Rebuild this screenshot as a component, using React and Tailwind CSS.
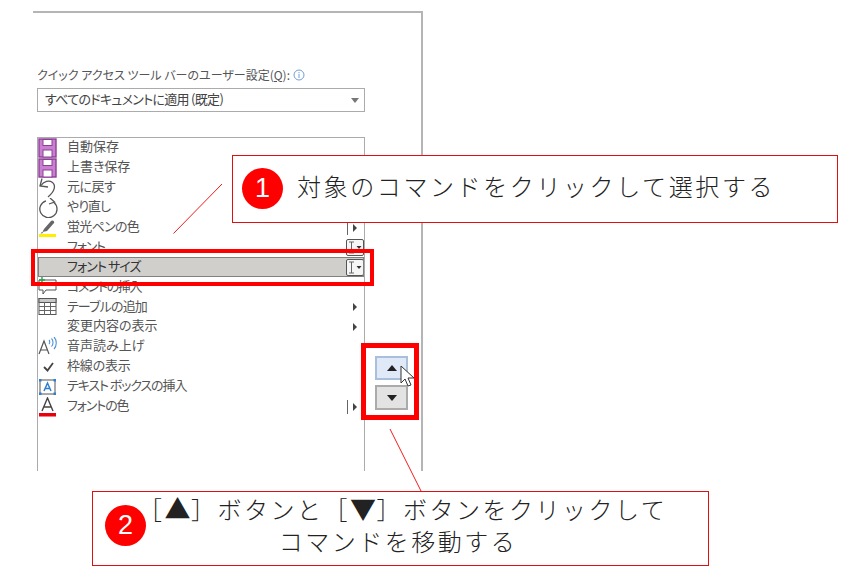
const jp = { fontFamily: '"Noto Sans CJK JP","Noto Sans",sans-serif' };

const Save = () => (
  <svg width="20" height="20" viewBox="0 0 20 20">
    <rect x="1" y="1" width="17" height="18" fill="#c97fd0" stroke="#8d3f96" strokeWidth="1.4" />
    <rect x="5" y="1.500" width="9" height="6" fill="#fff" stroke="#8d3f96" />
    <rect x="5" y="12" width="9" height="7" fill="#fff" stroke="#8d3f96" />
  </svg>
);
const Undo = () => (
  <svg width="20" height="20" viewBox="0 0 20 20" fill="none" stroke="#555" strokeWidth="1.3">
    <path d="M4 0.500L2 8l8 1" />
    <path d="M2.500 8C6 3 11 2 14.500 4.500 18 7.500 17 13 10 19" />
  </svg>
);
const Redo = () => (
  <svg width="20" height="20" viewBox="0 0 20 20" fill="none" stroke="#555" strokeWidth="1.3">
    <path d="M12 0l4.500 4-5.500 2" />
    <path d="M16 4.500A8.600 8.600 0 1 1 8 2.800" />
  </svg>
);
const Pen = () => (
  <svg width="20" height="20" viewBox="0 0 20 20">
    <path d="M6 11l7-8c1.500-1.500 4 .5 3 2l-7 8-4.500 1z" fill="#666" />
    <path d="M4 14l-1.500 1.500 3-.5z" fill="#555" />
    <rect x="1" y="16" width="17" height="3" fill="#ffee00" />
  </svg>
);
const Comment = () => (
  <svg width="20" height="20" viewBox="0 0 20 20">
    <path d="M4 3H18v10H8l-3 4v-4H1V3z" fill="#fff" stroke="#555" />
    <path d="M4 0v6M1 3h6" stroke="#2aa14b" strokeWidth="1.4" />
  </svg>
);
const Table = () => (
  <svg width="20" height="20" viewBox="0 0 20 20" fill="none">
    <rect x="1" y="1.500" width="17" height="16" fill="#fff" stroke="#555" />
    <rect x="1" y="1.500" width="17" height="4" fill="#c8c8c8" stroke="#555" />
    <path d="M1 9.500h17M1 13.500h17M6.500 5v13M12.500 5v13" stroke="#666" />
  </svg>
);
const Speak = () => (
  <svg width="20" height="20" viewBox="0 0 20 20" fill="none">
    <path d="M1 17L6 4l5 13M3 13h6" stroke="#555" strokeWidth="1.2" />
    <path d="M11 3c1 1 1 3 0 4M13.500 1.500c2 2 2 6 0 8M16 0c3 3 3 9 0 12" stroke="#4a90d9" strokeWidth="1.1" />
  </svg>
);
const Check = () => (
  <svg width="20" height="20" viewBox="0 0 20 20" fill="none">
    <path d="M6 10l3.500 3.500L15 6" stroke="#444" strokeWidth="1.8" />
  </svg>
);
const TextBox = () => (
  <svg width="20" height="20" viewBox="0 0 20 20" fill="none">
    <rect x="2" y="3" width="15" height="14" stroke="#555" />
    <path d="M6 14l3.500-8L13 14M7 11.500h5" stroke="#2f7fd1" strokeWidth="1.500" />
    <rect x="1" y="2" width="2.500" height="2.500" fill="#2f7fd1" />
    <rect x="15.500" y="2" width="2.500" height="2.500" fill="#2f7fd1" />
    <rect x="1" y="15.500" width="2.500" height="2.500" fill="#2f7fd1" />
    <rect x="15.500" y="15.500" width="2.500" height="2.500" fill="#2f7fd1" />
  </svg>
);
const FontColor = () => (
  <svg width="20" height="20" viewBox="0 0 20 20" fill="none">
    <path d="M4 14L9.500 1 15 14M6 10h7" stroke="#444" strokeWidth="1.4" />
    <rect x="1" y="16" width="17" height="3.500" fill="#e8000b" />
  </svg>
);
const Arrow = () => (
  <svg width="6" height="10" viewBox="0 0 6 10" className="mr-[6px] shrink-0">
    <path d="M1 1l4 4-4 4z" fill="#444" />
  </svg>
);
const Combo = () => (
  <span className="flex h-[17px] w-[18px] items-center rounded-[2px] border border-[#555] bg-[#f6f6f6]">
    <svg width="16" height="15" viewBox="0 0 16 15" fill="none">
      <path d="M2 2h5M2 13h5M4.500 2v11" stroke="#666" strokeWidth="1" />
      <path d="M9.500 6h5l-2.500 3z" fill="#333" />
    </svg>
  </span>
);
const SplitArrow = () => (
  <span className="flex items-center gap-[4px]">
    <span className="h-[14px] w-[1px] bg-[#666]" />
    <Arrow />
  </span>
);

const rows = [
  { label: "自動保存", icon: <Save />, track: "" },
  { label: "上書き保存", icon: <Save />, track: "" },
  { label: "元に戻す", icon: <Undo />, track: "tracking-[-0.5px]" },
  { label: "やり直し", icon: <Redo />, track: "tracking-[-1px]" },
  { label: "蛍光ペンの色", icon: <Pen />, right: <SplitArrow />, track: "tracking-[-0.7px]" },
  { label: "フォント", right: <Combo />, track: "tracking-[-1.2px]" },
  { label: "フォント サイズ", right: <Combo />, selected: true, track: "tracking-[-0.9px]" },
  { label: "コメントの挿入", icon: <Comment />, track: "tracking-[-1.4px]" },
  { label: "テーブルの追加", icon: <Table />, right: <Arrow />, track: "tracking-[-0.85px]" },
  { label: "変更内容の表示", right: <Arrow />, track: "" },
  { label: "音声読み上げ", icon: <Speak />, track: "" },
  { label: "枠線の表示", icon: <Check />, track: "tracking-[-0.2px]" },
  { label: "テキスト ボックスの挿入", icon: <TextBox />, track: "tracking-[-1.1px]" },
  { label: "フォントの色", icon: <FontColor />, right: <SplitArrow />, track: "tracking-[-1.1px]" },
];

const Circle = ({ n, className }) => (
  <span
    className={"absolute flex h-[41px] w-[41px] items-center justify-center rounded-full bg-[#ff0000] text-[27px] font-normal leading-none text-white " + className}
    style={{ fontFamily: '"Liberation Sans",sans-serif' }}
  >
    {n}
  </span>
);

export default function App() {
  return (
    <div className="relative h-[584px] w-[856px] overflow-hidden bg-white pl-[33px] pt-[11px]" style={jp}>
      <div className="h-[460px] w-[390px] border-r-2 border-t-2 border-[#b5b5b5] pl-[4px]">
        <div className="mt-[49px] flex h-[26px] items-center gap-[3px] text-[12px] leading-none text-[#555] [font-feature-settings:'palt']">
          <span>
            クイック アクセス ツール バーのユーザー設定(<span className="underline">Q</span>):
          </span>
          <svg width="12" height="12" viewBox="0 0 12 12" fill="none">
            <circle cx="6" cy="6" r="5" stroke="#6f9fd8" />
            <path d="M6 5v4M6 3v1.200" stroke="#6f9fd8" />
          </svg>
        </div>
        <div className="flex h-[24px] w-[328px] items-center justify-between border border-[#ababab] pl-[7px] pr-[5px] text-[13px] text-[#444] [font-feature-settings:'palt']">
          <span className="pb-[2px] tracking-[-0.7px]">すべてのドキュメントに適用 (既定)</span>
          <svg width="8" height="5" viewBox="0 0 8 5">
            <path d="M0 0h8L4 5z" fill="#777" />
          </svg>
        </div>
        <div className="mt-[25px] flex">
          <div className="h-[334px] w-[328px] shrink-0 border-x border-t border-[#ababab]">
            {rows.map(({ label, icon, right, selected, track }) => (
              <div
                key={label}
                className={
                  "flex h-[19.900px] items-center text-[13px] leading-none [font-feature-settings:'palt'] " +
                  (selected ? "bg-[#d0cfcb] text-[#333] outline outline-1 -outline-offset-1 outline-[#808080]" : "text-[#555]")
                }
              >
                <span className="flex w-[29px] shrink-0 items-center">{icon}</span>
                <span className={"grow whitespace-nowrap pb-[4px] " + track}>{label}</span>
                {right && <span className="flex w-[20px] shrink-0 justify-end">{right}</span>}
              </div>
            ))}
          </div>
          <div className="ml-[10px] mt-[219px] flex flex-col gap-[5px]">
            <button className="flex h-[24px] w-[33px] items-center justify-center border-2 border-[#a9bfdc] bg-[#dfe9f8]">
              <svg width="10" height="6" viewBox="0 0 10 6"><path d="M5 0l5 6H0z" fill="#222" /></svg>
            </button>
            <button className="flex h-[25px] w-[33px] items-center justify-center border-2 border-[#ababab] bg-[#e3e3e3]">
              <svg width="10" height="6" viewBox="0 0 10 6"><path d="M5 6L0 0h10z" fill="#222" /></svg>
            </button>
          </div>
        </div>
      </div>

      {/* cursor */}
      <svg className="absolute left-[399px] top-[365px]" width="17" height="23" viewBox="0 0 17 23">
        <path d="M2 1v17l4-4 3 7 3-1-3-7h6z" fill="#fff" stroke="#333" strokeWidth="1" />
      </svg>

      {/* annotation overlays */}
      <div className="absolute left-[31px] top-[249px] h-[37px] w-[343px] border-4 border-[#ff0000]" />
      <div className="absolute left-[361px] top-[343px] h-[77px] w-[58px] border-[5px] border-[#ff0000]" />
      <svg className="absolute left-0 top-0" width="856" height="584" fill="none">
        <path d="M173.500 233.500L222 184" stroke="#f01c1c" />
        <path d="M390 429L421 491" stroke="#f01c1c" />
      </svg>

      <div className="absolute left-[232px] top-[155px] h-[68px] w-[606px] border border-[#e01010] bg-white">
        <Circle n="1" className="left-[9px] top-[12px]" />
        <p className="absolute left-[64px] top-[13px] whitespace-nowrap text-[24px] font-light leading-[34px] tracking-[2.600px] text-[#222]">
          対象のコマンドをクリックして選択する
        </p>
      </div>
      <div className="absolute left-[92px] top-[491px] h-[75px] w-[617px] border border-[#e01010] bg-white">
        <Circle n="2" className="left-[12px] top-[13px]" />
        <p className="absolute left-[45px] top-[1px] w-[520px] whitespace-nowrap text-center text-[24px] font-light leading-[32px] tracking-[2.500px] text-[#222]">
          ［<span className="text-[26px] leading-none tracking-[0.500px]">▲</span>］ボタンと［<span className="text-[26px] leading-none tracking-[0.500px]">▼</span>］ボタンをクリックして
          <br />
          コマンドを移動する
        </p>
      </div>
    </div>
  );
}
